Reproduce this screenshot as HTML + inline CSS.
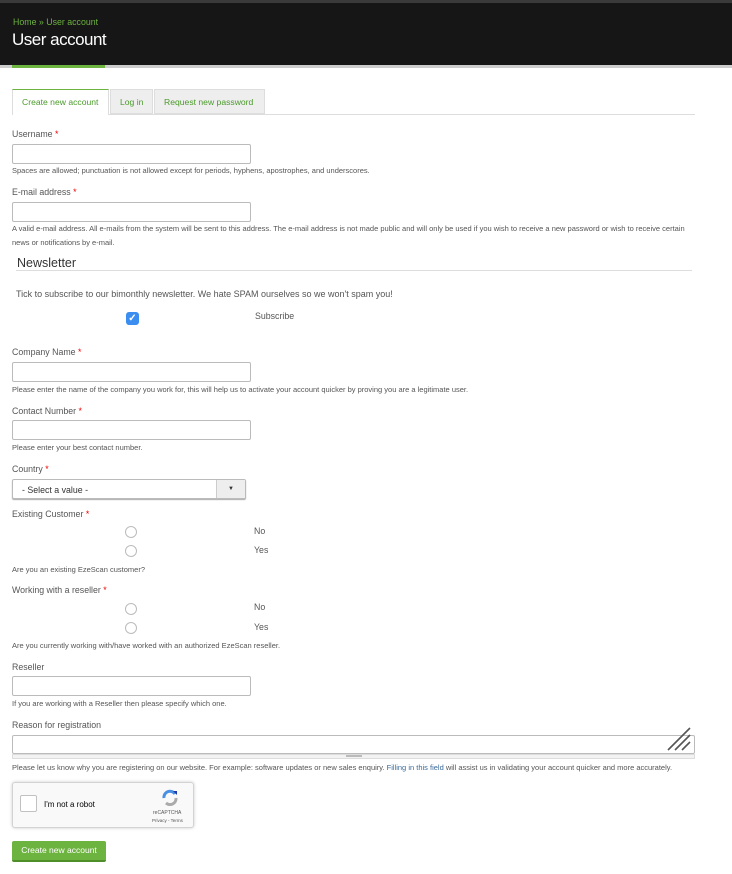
<!DOCTYPE html>
<html><head><meta charset="utf-8"><style>
*{margin:0;padding:0;box-sizing:border-box}
body{width:732px;height:874px;background:#fff;font-family:"Liberation Sans",sans-serif;position:relative;overflow:hidden;color:#555}
.a{position:absolute;white-space:nowrap}
.lbl{font-size:8.8px;color:#555}
.req{color:#e00}
.d{font-size:7.5px;color:#555}
.in{position:absolute;border:1px solid #bbb;border-radius:2px;background:#fff;height:20px}
.rad{position:absolute;width:12px;height:12px;border:1px solid #bbb;border-radius:50%;background:#fff}
.opt{font-size:8.8px;color:#555}
</style></head><body>
<div class="a" style="left:0;top:0;width:732px;height:3px;background:#3a3a3a"></div>
<div class="a" style="left:0;top:3px;width:732px;height:62px;background:#161616"></div>
<div class="a" style="left:0;top:65px;width:732px;height:3px;background:#ccc"></div>
<div class="a" style="left:12px;top:65px;width:93px;height:3px;background:#6db33f"></div>
<div class="a" style="left:13px;top:17px;font-size:8.8px;color:#6db33f">Home » User account</div>
<div class="a" style="left:12px;top:30px;font-size:17px;color:#fff;letter-spacing:-0.5px">User account</div>

<div class="a" style="left:12px;top:114px;width:683px;height:1px;background:#ddd"></div>
<div class="a" style="left:12px;top:89px;width:97px;height:26px;background:#fff;border:1px solid #ddd;border-top:1px solid #6db33f;border-bottom:none"></div>
<div class="a" style="left:110px;top:89px;width:43px;height:25px;background:#eee;border:1px solid #ddd"></div>
<div class="a" style="left:154px;top:89px;width:111px;height:25px;background:#eee;border:1px solid #ddd"></div>
<div class="a" style="left:22px;top:97px;font-size:8.6px;color:#4a9a2a">Create new account</div>
<div class="a" style="left:120px;top:97px;font-size:8.6px;color:#4a9a2a">Log in</div>
<div class="a" style="left:164px;top:97px;font-size:8.6px;color:#4a9a2a">Request new password</div>

<div class="a lbl" style="left:12px;top:129px">Username <span class="req">*</span></div>
<div class="in" style="left:12px;top:144px;width:239px"></div>
<div class="a d" style="left:12px;top:166px">Spaces are allowed; punctuation is not allowed except for periods, hyphens, apostrophes, and underscores.</div>

<div class="a lbl" style="left:12px;top:187px">E-mail address <span class="req">*</span></div>
<div class="in" style="left:12px;top:202px;width:239px"></div>
<div class="a d" style="left:12px;top:224px">A valid e-mail address. All e-mails from the system will be sent to this address. The e-mail address is not made public and will only be used if you wish to receive a new password or wish to receive certain</div>
<div class="a d" style="left:12px;top:238px">news or notifications by e-mail.</div>

<div class="a" style="left:17px;top:256px;font-size:12.5px;color:#333">Newsletter</div>
<div class="a" style="left:16px;top:270px;width:676px;height:1px;background:#ddd"></div>
<div class="a" style="left:16px;top:289px;font-size:9px;color:#555">Tick to subscribe to our bimonthly newsletter. We hate SPAM ourselves so we won't spam you!</div>
<div class="a" style="left:126px;top:312px;width:13px;height:13px;background:#3b8ef0;border-radius:3px;color:#fff;font-size:10px;line-height:13px;text-align:center;font-weight:bold">✓</div>
<div class="a opt" style="left:255px;top:311px">Subscribe</div>

<div class="a lbl" style="left:12px;top:347px">Company Name <span class="req">*</span></div>
<div class="in" style="left:12px;top:362px;width:239px"></div>
<div class="a d" style="left:12px;top:385px">Please enter the name of the company you work for, this will help us to activate your account quicker by proving you are a legitimate user.</div>

<div class="a lbl" style="left:12px;top:406px">Contact Number <span class="req">*</span></div>
<div class="in" style="left:12px;top:420px;width:239px"></div>
<div class="a d" style="left:12px;top:443px">Please enter your best contact number.</div>

<div class="a lbl" style="left:12px;top:464px">Country <span class="req">*</span></div>
<div class="in" style="left:12px;top:479px;width:234px;box-shadow:0 1px 1px #aaa"></div>
<div class="a" style="left:216px;top:480px;width:29px;height:18px;background:#eee;border-left:1px solid #ccc;font-size:6px;text-align:center;line-height:18px;color:#333">▼</div>
<div class="a" style="left:22px;top:485px;font-size:8.8px;color:#333">- Select a value -</div>

<div class="a lbl" style="left:12px;top:509px">Existing Customer <span class="req">*</span></div>
<div class="rad" style="left:125px;top:526px"></div>
<div class="a opt" style="left:254px;top:526px">No</div>
<div class="rad" style="left:125px;top:545px"></div>
<div class="a opt" style="left:254px;top:545px">Yes</div>
<div class="a d" style="left:12px;top:565px">Are you an existing EzeScan customer?</div>

<div class="a lbl" style="left:12px;top:585px">Working with a reseller <span class="req">*</span></div>
<div class="rad" style="left:125px;top:603px"></div>
<div class="a opt" style="left:254px;top:602px">No</div>
<div class="rad" style="left:125px;top:622px"></div>
<div class="a opt" style="left:254px;top:622px">Yes</div>
<div class="a d" style="left:12px;top:641px">Are you currently working with/have worked with an authorized EzeScan reseller.</div>

<div class="a lbl" style="left:12px;top:662px">Reseller</div>
<div class="in" style="left:12px;top:676px;width:239px"></div>
<div class="a d" style="left:12px;top:699px">If you are working with a Reseller then please specify which one.</div>

<div class="a lbl" style="left:12px;top:720px">Reason for registration</div>
<div class="in" style="left:12px;top:735px;width:683px;height:19px"></div>
<div class="a" style="left:12px;top:754px;width:683px;height:5px;background:#f3f3f3;border:1px solid #ddd"></div>
<div class="a" style="left:346px;top:755px;width:16px;height:2px;background:#bbb"></div>
<svg class="a" style="left:666px;top:726px" width="28" height="28"><path d="M2 24L24 2M9 24L24 9M16 24L24 16" stroke="#555" stroke-width="1.6"/></svg>
<div class="a d" style="left:12px;top:763px">Please let us know why you are registering on our website. For example: software updates or new sales enquiry. <span style="color:#3a6a9a">Filling in this field</span> will assist us in validating your account quicker and more accurately.</div>

<div class="a" style="left:12px;top:782px;width:182px;height:46px;background:#f9f9f9;border:1px solid #d3d3d3;border-radius:3px;box-shadow:0 0 3px #ccc"></div>
<div class="a" style="left:20px;top:795px;width:17px;height:17px;background:#fff;border:1px solid #c1c1c1;border-radius:2px"></div>
<div class="a" style="left:44px;top:800px;font-size:8px;color:#000">I'm not a robot</div>
<svg class="a" style="left:160px;top:788px" width="20" height="20"><path d="M4 10A6 6 0 0 1 15 6" stroke="#4a90e2" stroke-width="3" fill="none"/><path d="M16 10A6 6 0 0 1 6 15" stroke="#aaa" stroke-width="3" fill="none"/><path d="M13 3L17 3L17 7Z" fill="#1c3aa9"/></svg>
<div class="a" style="left:153px;top:810px;font-size:5px;color:#555">reCAPTCHA</div>
<div class="a" style="left:152px;top:818px;font-size:4.5px;color:#555">Privacy - Terms</div>

<div class="a" style="left:12px;top:841px;width:94px;height:21px;background:#6db33f;border-radius:2px;border-bottom:2px solid #4e8f2a;color:#fff;font-size:8.5px;text-align:center;line-height:19px">Create new account</div>
</body></html>
